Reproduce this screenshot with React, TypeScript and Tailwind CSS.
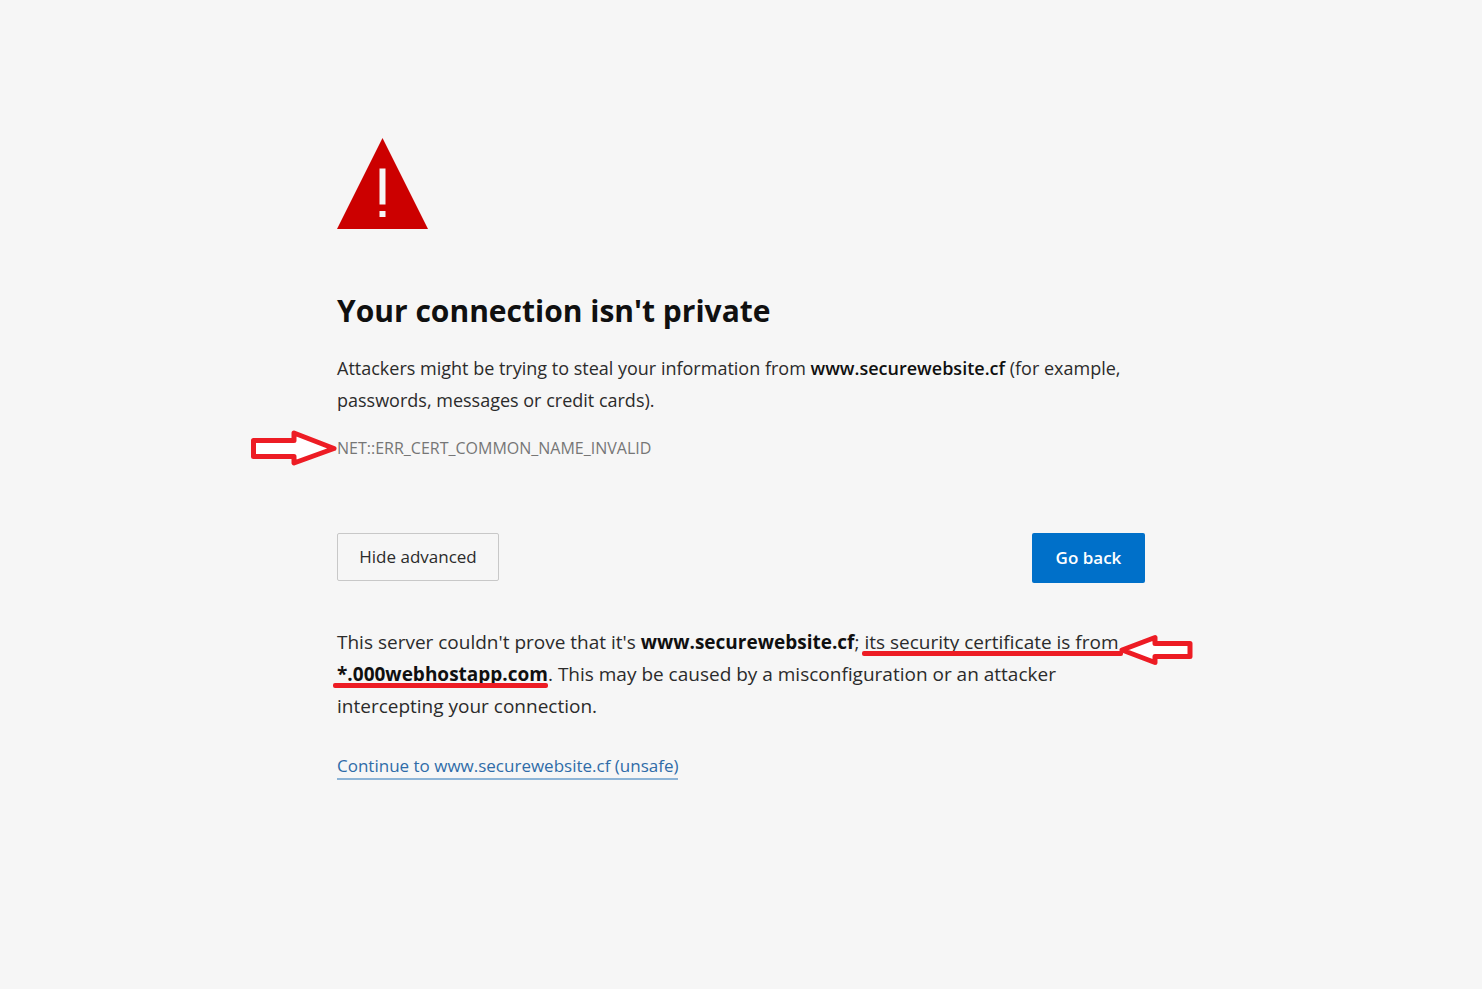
import type { ReactNode } from "react";
import clsx from "clsx";

function WarningIcon() {
  return (
    <svg viewBox="0 0 91 91" className="h-[91px] w-[91px]" role="img" aria-label="Warning">
      <path d="M45.5 0 91 91H0Z" fill="#cc0000" />
      <path d="M42.500 30.500h6v36h-6zM42.500 73h6v6h-6z" fill="#f6f6f6" />
    </svg>
  );
}

/** Text with a red marker line drawn under it. */
function Marked({ line, children }: { line: string; children: ReactNode }) {
  return (
    <span className="relative inline-block whitespace-nowrap">
      {children}
      <span className={clsx("absolute bottom-0.5 h-[5px] rounded-xs bg-[#ed1c24]", line)} />
    </span>
  );
}

function ArrowRight() {
  return (
    <svg viewBox="0 0 88 38" className="absolute right-full top-1/2 h-[38px] w-[88px] -translate-y-1/2" aria-hidden="true">
      <path d="M4.500 11.500H45V4L85 19.500 45 34V27.500H4.500Z" fill="#fff" stroke="#ed1c24" strokeWidth="5" strokeLinejoin="round" />
    </svg>
  );
}

function ArrowLeft() {
  return (
    <svg viewBox="0 0 76 32" className="absolute left-full -bottom-2 h-8 w-[76px]" aria-hidden="true">
      <path d="M3 16 36 3.500V9.500H71V22.500H36V28.500Z" fill="#fff" stroke="#ed1c24" strokeWidth="5" strokeLinejoin="round" />
    </svg>
  );
}

export default function App() {
  return (
    <div className="min-h-screen bg-[#f6f6f6] px-4 font-['Open_Sans',sans-serif] text-[#2b2b2b]">
      <main className="mx-auto max-w-[808px] pt-[138px] pb-16">
        <WarningIcon />
        <h1 className="mt-[62px] text-[30px] leading-10 font-bold text-[#101010]">Your connection isn't private</h1>
        <p className="mt-[21px] text-[18px] leading-8">
          Attackers might be trying to steal your information from{" "}
          <strong className="font-semibold text-[#101010]">www.securewebsite.cf</strong> (for example, passwords, messages or
          credit cards).
        </p>
        <div className="relative mt-5 w-fit text-[16px] leading-6 text-[#767676]">
          <ArrowRight />
          NET::ERR_CERT_COMMON_NAME_INVALID
        </div>

        <div className="mt-[73px] flex items-start justify-between">
          <button type="button" className="h-12 w-[162px] rounded-xs border border-[#c8c8c8] text-[17px]">
            Hide advanced
          </button>
          <button type="button" className="h-[50px] w-[113px] rounded-xs bg-[#0070c9] text-[17px] font-semibold text-white">
            Go back
          </button>
        </div>

        <p className="mt-[43px] text-[19px] leading-8">
          This server couldn't prove that it's <strong className="font-bold text-[#101010]">www.securewebsite.cf</strong>;{" "}
          <Marked line="-left-0.5 -right-1">
            its security certificate is from
            <ArrowLeft />
          </Marked>{" "}
          <Marked line="-left-1 right-0">
            <strong className="font-bold text-[#101010]">*.000webhostapp.com</strong>
          </Marked>
          . This may be caused by a misconfiguration or an attacker intercepting your connection.
        </p>

        <a href="#" className="mt-8 inline-block border-b-2 border-[#8db4d6] text-[17px] leading-6 text-[#2f6ca8]">
          Continue to www.securewebsite.cf (unsafe)
        </a>
      </main>
    </div>
  );
}
